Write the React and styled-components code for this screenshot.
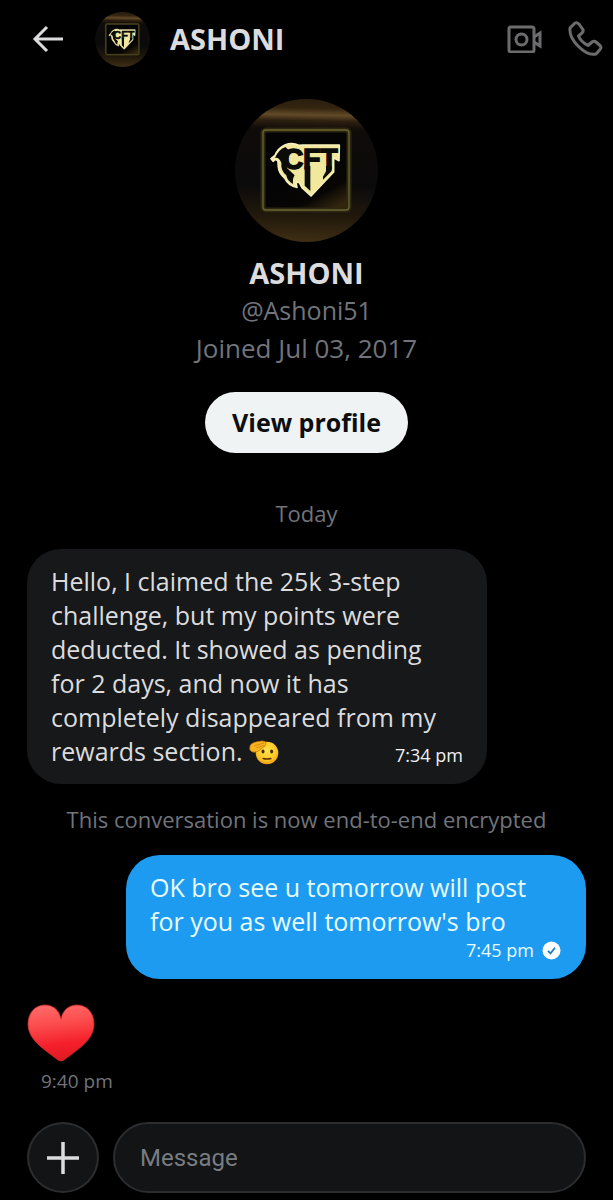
import React from "react";
import styled, { createGlobalStyle } from "styled-components";

const Global = createGlobalStyle`
  * { box-sizing: border-box; }
  body { margin: 0; background: #000; color: #dcdcde; font-family: "Open Sans", "Liberation Sans", sans-serif; }
  button, input { font: inherit; }
`;

const Page = styled.div`
  display: flex;
  flex-direction: column;
  min-height: 100vh;
  background: #000;
`;
const Header = styled.header`
  display: flex;
  align-items: center;
  height: 78px;
  padding: 0 10px 0 32px;
`;
const IconButton = styled.button`
  display: flex;
  padding: 0;
  border: 0;
  background: none;
  color: ${(p) => p.$color};
  margin-left: ${(p) => p.$gap || 0}px;
  cursor: pointer;
`;
const HeaderTitle = styled.h1`
  flex: 1;
  margin: 0 0 0 20px;
  font-size: 29px;
  line-height: 36px;
  font-weight: 700;
`;
const Avatar = styled.svg`
  display: block;
  flex: none;
  width: ${(p) => p.$size}px;
  height: ${(p) => p.$size}px;
  margin-left: ${(p) => p.$gap || 0}px;
  border-radius: 50%;
`;
const Emblem = styled.text`
  font-family: "Liberation Sans", sans-serif;
  font-size: 86px;
  font-weight: 700;
  fill: #0b0b07;
  stroke: #0b0b07;
  stroke-width: 4px;
`;
const Profile = styled.section`
  display: flex;
  flex-direction: column;
  align-items: center;
  padding-top: 21px;
`;
const Name = styled.h2`
  margin: 12px 0 0;
  font-size: 29px;
  line-height: 37px;
  font-weight: 700;
`;
const Detail = styled.p`
  margin: 0;
  font-size: ${(p) => p.$size}px;
  line-height: 38px;
  color: #71747a;
`;
const ProfileLink = styled.button`
  height: 61px;
  margin-top: 25px;
  padding: 0 27px 2px;
  border: 0;
  border-radius: 31px;
  background: #eff3f4;
  color: #0c0e10;
  font-size: 25px;
  font-weight: 700;
  cursor: pointer;
`;
const Notice = styled.p`
  margin: ${(p) => p.$top}px 0 21px;
  font-size: 22px;
  line-height: 30px;
  text-align: center;
  color: #71747a;
`;
const Thread = styled.main`
  display: flex;
  flex-direction: column;
  padding: 0 27px;
`;
const Bubble = styled.article`
  width: 460px;
  max-width: 100%;
  padding: 15px 24px 16px;
  border-radius: 34px;
  align-self: ${(p) => (p.$mine ? "flex-end" : "flex-start")};
  background: ${(p) => (p.$mine ? "#1d9bf0" : "#16181a")};
  color: ${(p) => (p.$mine ? "#e8fbff" : "#dcdcde")};
`;
const BubbleText = styled.p`
  margin: 0;
  padding-right: 8px;
  font-size: 25px;
  line-height: 34px;
`;
const Time = styled.time`
  font-size: ${(p) => p.$size || 18}px;
  line-height: 25px;
  color: ${(p) => p.$color};
`;
const LastLine = styled.div`
  display: flex;
  justify-content: space-between;
  align-items: flex-end;
  height: 34px;
`;
const Status = styled.div`
  display: flex;
  justify-content: flex-end;
  align-items: center;
  gap: 8px;
  padding-right: 1px;
`;
const Reaction = styled.article`
  display: flex;
  flex-direction: column;
  align-items: flex-start;
  margin-top: 25px;
`;
const ReactionTime = styled(Time)`
  margin: 7px 0 0 14px;
`;
const Composer = styled.form`
  display: flex;
  align-items: center;
  gap: 14px;
  margin-top: 28px;
  padding: 0 27px 7px;
`;
const AddButton = styled.button`
  display: flex;
  align-items: center;
  justify-content: center;
  flex: none;
  width: 72px;
  height: 71px;
  padding: 0;
  border: 2px solid #2b2d2f;
  border-radius: 50%;
  background: #121416;
  color: #dcdcde;
`;
const MessageInput = styled.input`
  flex: 1;
  min-width: 0;
  height: 71px;
  padding: 0 25px;
  border: 2px solid #2b2d2f;
  border-radius: 36px;
  background: #121416;
  color: #dcdcde;
  font-family: Roboto, sans-serif;
  font-size: 24px;
  outline: none;
  &::placeholder { color: #797c80; opacity: 1; }
`;
const InlineEmoji = styled.svg`
  width: 30px;
  height: 26px;
  vertical-align: -4px;
`;

function GroupAvatar({ size, gap, id }) {
  return (
    <Avatar $size={size} $gap={gap} viewBox="0 0 143 143" role="img" aria-label="ASHONI avatar">
      <defs>
        <linearGradient id={id + "bg"} x1="0.42" y1="0" x2="0.4" y2="1">
          <stop offset="0" stopColor="#2c1f10" />
          <stop offset="0.06" stopColor="#33240f" />
          <stop offset="0.11" stopColor="#624a28" />
          <stop offset="0.15" stopColor="#2e2010" />
          <stop offset="0.21" stopColor="#0f0b09" />
          <stop offset="0.6" stopColor="#0b0a0b" />
          <stop offset="0.8" stopColor="#1f170b" />
          <stop offset="1" stopColor="#3e2e14" />
        </linearGradient>
        <linearGradient id={id + "in"} x1="0.5" y1="0.5" x2="0.8" y2="1">
          <stop offset="0" stopColor="#040405" />
          <stop offset="0.6" stopColor="#080604" />
          <stop offset="1" stopColor="#33260f" />
        </linearGradient>
      </defs>
      <rect width="143" height="143" fill={`url(#${id}bg)`} />
      <rect x="28" y="31" width="86" height="80" rx="3" fill={`url(#${id}in)`} stroke="#2b2711" strokeWidth="5" />
      <rect x="28" y="31" width="86" height="80" rx="3" fill="none" stroke="#6b6430" strokeWidth="1.3" />
      <g transform="translate(31 37) scale(0.3333)">
        <path
          d="M15 68L27 58Q36 36 58 26Q80 18 98 28L112 27H220L219 74L203 65V108L135 180L108 155L100 140L93 137Q88 145 93 154Q66 149 56 126Q38 111 37 92L36 76Q28 66 22 76Z"
          fill="#f1e89e" stroke="#f7f0bb" strokeWidth="5" strokeLinejoin="round"
        />
        <path d="M27 66Q36 42 58 33L72 46Q56 66 63 96L86 118Q79 128 81 144Q64 136 61 118Q44 104 46 80Q38 62 27 66Z" fill="#0b0b07" />
        <path d="M116 90H133V165L116 149ZM180 90H197V105L171 131V122L180 106Z" fill="#0b0b07" />
        <Emblem x="50" y="99">C</Emblem>
        <Emblem x="111" y="98">F</Emblem>
        <Emblem x="163" y="98">T</Emblem>
      </g>
    </Avatar>
  );
}

function Salute() {
  return (
    <InlineEmoji viewBox="0 0 30 26" role="img" aria-label="saluting face">
      <defs>
        <radialGradient id="face" cx="0.5" cy="0.4" r="0.6">
          <stop offset="0" stopColor="#ffe14a" />
          <stop offset="0.7" stopColor="#fdc827" />
          <stop offset="1" stopColor="#f09a10" />
        </radialGradient>
      </defs>
      <circle cx="18" cy="14" r="11.3" fill="url(#face)" />
      <ellipse cx="14" cy="12.5" rx="1.5" ry="2.1" fill="#4a2a05" />
      <ellipse cx="22.6" cy="12.5" rx="1.5" ry="2.1" fill="#4a2a05" />
      <path d="M14 19.5Q18 20.5 22 19.5" fill="none" stroke="#5b3408" strokeWidth="1.3" strokeLinecap="round" />
      <path d="M1 8C1 5 4 4 7 3L13 2Q17 2 17 4L16 7L12 10Q8 14 4 13Q0 12 1 8Z" fill="#f8b51f" stroke="#c9780d" strokeWidth="0.8" />
      <path d="M5 7L15 4M7 9L15 6.5" stroke="#c9780d" strokeWidth="0.7" />
    </InlineEmoji>
  );
}

function Heart() {
  return (
    <svg width="68" height="58" viewBox="0 0 68 58" role="img" aria-label="red heart">
      <defs>
        <linearGradient id="heart" x1="0.4" y1="0" x2="0.55" y2="1">
          <stop offset="0" stopColor="#ff6a68" />
          <stop offset="0.35" stopColor="#fb4a4b" />
          <stop offset="0.7" stopColor="#f51f2b" />
          <stop offset="1" stopColor="#dd1a20" />
        </linearGradient>
      </defs>
      <path
        d="M34 15C32 5 25 1 18 1C8 1 1 9 1 20C1 36 17 45 31 56Q34 58 37 56C51 45 67 36 67 20C67 9 60 1 50 1C43 1 36 5 34 15Z"
        fill="url(#heart)" stroke="#c92a2b" strokeWidth="0.8"
      />
    </svg>
  );
}

export default function App() {
  return (
    <Page>
      <Global />
      <Header>
        <IconButton $color="#dcdcde" aria-label="Back">
          <svg width="32" height="28" viewBox="0 0 32 28" fill="none" stroke="currentColor" strokeWidth="3">
            <path d="M31 14H4M15 2L3 14L15 26" />
          </svg>
        </IconButton>
        <GroupAvatar size={55} gap={31} id="small" />
        <HeaderTitle>ASHONI</HeaderTitle>
        <IconButton $color="#6c6c6e" aria-label="Video call">
          <svg width="36" height="28" viewBox="0 0 36 28" fill="none" stroke="currentColor" strokeWidth="3">
            <rect x="3" y="2" width="25" height="25" rx="2" />
            <circle cx="15.5" cy="14.5" r="5.500" />
            <path d="M28 12L34 8V21L28 17" />
          </svg>
        </IconButton>
        <IconButton $color="#6c6c6e" $gap={25} aria-label="Voice call">
          <svg width="36" height="36" viewBox="0 0 36 36" fill="none" stroke="currentColor" strokeWidth="3" strokeLinejoin="round">
            <path d="M3 7L8 2Q10 1 12 3L15.500 8Q17 10 15 12L11.500 15Q14 21 21 24.500L25 21Q27 19.500 29 21L33 24.500Q35 26.500 33 28.500L29 33Q21 35 11 25Q2 16 3 7Z" />
          </svg>
        </IconButton>
      </Header>
      <Profile>
        <GroupAvatar size={143} id="large" />
        <Name>ASHONI</Name>
        <Detail $size={25}>@Ashoni51</Detail>
        <Detail $size={26}>Joined Jul 03, 2017</Detail>
        <ProfileLink type="button">View profile</ProfileLink>
      </Profile>
      <Thread>
        <Notice $top={45}>Today</Notice>
        <Bubble>
          <BubbleText>
            Hello, I claimed the 25k 3-step challenge, but my points were deducted. It showed as pending for 2 days, and
            now it has completely disappeared from my
          </BubbleText>
          <LastLine>
            <BubbleText as="span">
              rewards section. <Salute />
            </BubbleText>
            <Time $color="#f0f0f2">7:34 pm</Time>
          </LastLine>
        </Bubble>
        <Notice $top={20}>This conversation is now end-to-end encrypted</Notice>
        <Bubble $mine>
          <BubbleText>OK bro see u tomorrow will post for you as well tomorrow's bro</BubbleText>
          <Status>
            <Time $color="#e8fbff">7:45 pm</Time>
            <svg width="19" height="19" viewBox="0 0 19 19" role="img" aria-label="Sent">
              <circle cx="9.5" cy="9.5" r="9" fill="#fff" />
              <path d="M6 9.800L8.500 12.300L13 6.800" fill="none" stroke="#1d7fc4" strokeWidth="1.8" />
            </svg>
          </Status>
        </Bubble>
        <Reaction>
          <Heart />
          <ReactionTime $size={19} $color="#71747a">9:40 pm</ReactionTime>
        </Reaction>
      </Thread>
      <Composer onSubmit={(e) => e.preventDefault()}>
        <AddButton type="button" aria-label="Add attachment">
          <svg width="32" height="32" viewBox="0 0 32 32" stroke="currentColor" strokeWidth="3.5">
            <path d="M16 0V32M0 16H32" />
          </svg>
        </AddButton>
        <MessageInput type="text" aria-label="Message" placeholder="Message" />
      </Composer>
    </Page>
  );
}
